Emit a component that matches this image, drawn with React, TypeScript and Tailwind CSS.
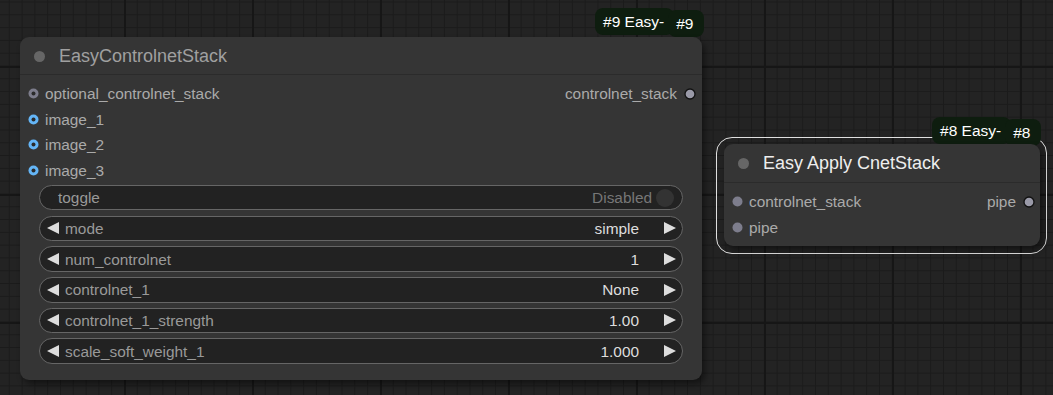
import React from "react"

const font = "font-['Liberation_Sans',Arial,sans-serif]"

const LeftArrow = () => (
  <svg width="12" height="12" viewBox="0 0 12 12" className="shrink-0">
    <path d="M0 6 L12 0 L12 12 Z" fill="#dddddd" />
  </svg>
)

const RightArrow = () => (
  <svg width="12" height="12" viewBox="0 0 12 12" className="shrink-0">
    <path d="M12 6 L0 0 L0 12 Z" fill="#dddddd" />
  </svg>
)

const SlotDot = ({ color, hollow }: { color: string; hollow?: boolean }) => (
  <svg width="11" height="11" viewBox="0 0 11 11" className="shrink-0">
    <circle cx="5.5" cy="5.5" r="5" fill={color} />
    {hollow && <circle cx="5.5" cy="5.5" r="2" fill="#2a2a2a" />}
  </svg>
)

const OutDot = () => (
  <svg width="12" height="12" viewBox="0 0 12 12" className="shrink-0">
    <circle cx="6" cy="6" r="5" fill="#9a9aa8" stroke="#111" strokeWidth="1.3" />
  </svg>
)

const ComboWidget = ({ label, value }: { label: string; value: string }) => (
  <div className="flex h-[25.6px] items-center rounded-full border border-[#666] bg-[#222] pl-[7px] pr-[6px]">
    <LeftArrow />
    <span className="ml-[6px] text-[15.4px] text-[#999]">{label}</span>
    <span className="ml-auto text-[15.4px] text-[#ddd]">{value}</span>
    <span className="ml-[25px]">
      <RightArrow />
    </span>
  </div>
)

const Badge = ({ id }: { id: string }) => (
  <div className={`flex items-start ${font} text-[15.5px] text-white`}>
    <div className="flex h-[27px] items-center rounded-[8px] bg-[#0e1d0f] pl-[8px] pr-[10px]">
      #{id} Easy-
    </div>
    <div className="-ml-[6px] mt-[2px] flex h-[27px] items-center rounded-[8px] bg-[#0e1d0f] pl-[8px] pr-[11px]">
      #{id}
    </div>
  </div>
)

export default function App() {
  return (
    <div
      className={`relative h-[395px] w-[1053px] overflow-hidden bg-[#232323] ${font} [background-image:linear-gradient(to_right,#161616_2px,transparent_2px),linear-gradient(to_bottom,#161616_2px,transparent_2px),linear-gradient(to_right,#1b1b1b_1px,transparent_1px),linear-gradient(to_bottom,#1b1b1b_1px,transparent_1px)] [background-size:128px_128px,128px_128px,12.8px_12.8px,12.8px_12.8px] [background-position:124px_0,0_66px,8.8px_0,0_1.5px]`}
    >
      {/* node #9 */}
      <div className="absolute left-[595px] top-[8px]">
        <Badge id="9" />
      </div>
      <div className="absolute left-[20px] top-[37px] flex h-[343px] w-[682px] flex-col rounded-[9px] bg-[#353535] shadow-[3px_4px_6px_rgba(0,0,0,0.45)]">
        <div className="flex h-[38px] items-center border-b border-[#2b2b2b] pl-[14px] pt-[2px]">
          <span className="h-[11px] w-[11px] rounded-full bg-[#666]" />
          <span className="ml-[14px] text-[18px] text-[#a0a0a0]">EasyControlnetStack</span>
        </div>
        <div className="flex flex-col pt-[6px]">
          <div className="flex h-[25.6px] items-center pl-[8px] pr-[6px]">
            <SlotDot color="#7d7d8c" hollow />
            <span className="ml-[6px] text-[15.4px] text-[#aaa]">optional_controlnet_stack</span>
            <span className="ml-auto text-[15.4px] text-[#aaa]">controlnet_stack</span>
            <span className="ml-[7px]">
              <OutDot />
            </span>
          </div>
          {["image_1", "image_2", "image_3"].map((n) => (
            <div key={n} className="flex h-[25.6px] items-center pl-[8px]">
              <SlotDot color="#64b5f6" hollow />
              <span className="ml-[6px] text-[15.4px] text-[#aaa]">{n}</span>
            </div>
          ))}
        </div>
        <div className="mx-[19px] mt-[1.5px] flex flex-col gap-[5.12px]">
          <div className="flex h-[25.6px] items-center rounded-full border border-[#666] bg-[#222] pl-[18px] pr-[8px]">
            <span className="text-[15.4px] text-[#999]">toggle</span>
            <span className="ml-auto text-[15.4px] text-[#777]">Disabled</span>
            <span className="ml-[4px] h-[18px] w-[18px] rounded-full bg-[#333]" />
          </div>
          <ComboWidget label="mode" value="simple" />
          <ComboWidget label="num_controlnet" value="1" />
          <ComboWidget label="controlnet_1" value="None" />
          <ComboWidget label="controlnet_1_strength" value="1.00" />
          <ComboWidget label="scale_soft_weight_1" value="1.000" />
        </div>
      </div>

      {/* node #8, selected */}
      <div className="absolute left-[716px] top-[137px] h-[117px] w-[331px] rounded-[16px] border-[1.5px] border-[#e0e0e0]" />
      <div className="absolute left-[932px] top-[117px]">
        <Badge id="8" />
      </div>
      <div className="absolute left-[724px] top-[144px] flex h-[102px] w-[316px] flex-col rounded-[9px] bg-[#353535] shadow-[3px_4px_6px_rgba(0,0,0,0.45)]">
        <div className="flex h-[39px] items-center border-b border-[#2b2b2b] pl-[14px] pt-[1px]">
          <span className="h-[11px] w-[11px] rounded-full bg-[#666]" />
          <span className="ml-[14px] text-[18px] text-[#eee]">Easy Apply CnetStack</span>
        </div>
        <div className="flex flex-col pt-[6px]">
          <div className="flex h-[25.6px] items-center pl-[8px] pr-[5px]">
            <SlotDot color="#7d7d8c" />
            <span className="ml-[6px] text-[15.4px] text-[#aaa]">controlnet_stack</span>
            <span className="ml-auto text-[15.4px] text-[#aaa]">pipe</span>
            <span className="ml-[7px]">
              <OutDot />
            </span>
          </div>
          <div className="flex h-[25.6px] items-center pl-[8px]">
            <SlotDot color="#7d7d8c" />
            <span className="ml-[6px] text-[15.4px] text-[#aaa]">pipe</span>
          </div>
        </div>
      </div>
    </div>
  )
}
